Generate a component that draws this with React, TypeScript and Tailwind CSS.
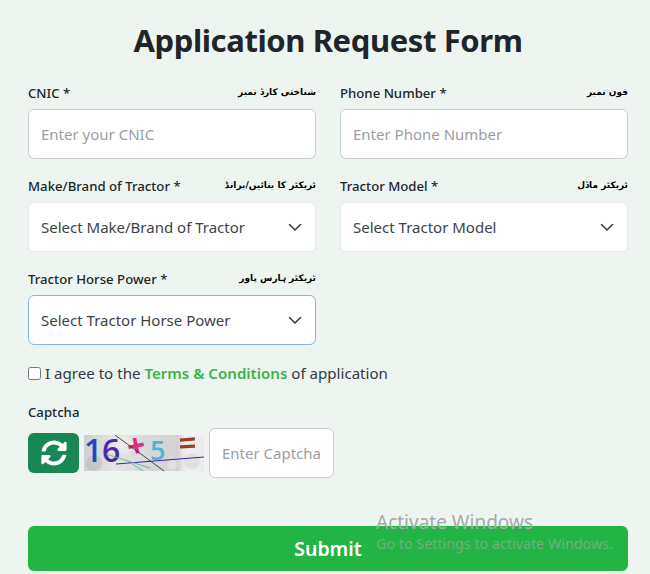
import React from "react";

const font = { fontFamily: '"Noto Sans", sans-serif' };

function Chevron() {
  return (
    <svg width="14" height="14" viewBox="0 0 14 14" className="shrink-0" fill="none">
      <path d="M1.5 4.5 7 10l5.5-5.5" stroke="#343a40" strokeWidth="1.5" strokeLinecap="round" strokeLinejoin="round" />
    </svg>
  );
}

function Label({ en, ur }: { en: string; ur: string }) {
  return (
    <div className="flex h-4 items-center justify-between mb-2">
      <label className="text-[13.2px] font-medium leading-4 text-[#212529]">{en}</label>
      <span dir="rtl" className="text-[9px] font-bold leading-4 text-black -mt-0.5" style={{ fontFamily: '"DejaVu Sans", sans-serif' }}>{ur}</span>
    </div>
  );
}

function TextField({ en, ur, ph }: { en: string; ur: string; ph: string }) {
  return (
    <div>
      <Label en={en} ur={ur} />
      <input
        placeholder={ph}
        className="w-full h-[50px] rounded-md border border-[#c9cccc] bg-white px-3 text-[15px] text-[#212529] placeholder:text-[#9a9ea3] outline-none"
      />
    </div>
  );
}

function SelectField({ en, ur, ph, focus }: { en: string; ur: string; ph: string; focus?: boolean }) {
  return (
    <div>
      <Label en={en} ur={ur} />
      <div className={focus
        ? "flex h-[50px] items-center justify-between rounded-md border border-[#86b7e8] bg-white pl-3 pr-[13px] text-[15px] text-[#3c4348]"
        : "flex h-[50px] items-center justify-between rounded-md border border-[#e6e9e8] bg-white pl-3 pr-[13px] text-[15px] text-[#3c4348]"}>
        <span>{ph}</span>
        <Chevron />
      </div>
    </div>
  );
}

function Captcha() {
  return (
    <svg width="120" height="36" viewBox="0 0 120 36" className="shrink-0 overflow-visible" fontFamily="Open Sans">
      <defs>
        <linearGradient id="cg" x1="0" x2="1" y1="0" y2="0">
          <stop offset="0" stopColor="#cfcfcf" />
          <stop offset="0.25" stopColor="#e4e4e4" />
          <stop offset="0.55" stopColor="#d8d8d8" />
          <stop offset="0.78" stopColor="#d2d2d2" />
          <stop offset="0.85" stopColor="#f0f0f0" />
          <stop offset="1" stopColor="#ebebeb" />
        </linearGradient>
      </defs>
      <rect width="120" height="36" fill="url(#cg)" />
      <circle cx="10" cy="28" r="8" fill="#bdbdbd" opacity="0.6" />
      <circle cx="40" cy="10" r="9" fill="#ededed" opacity="0.7" />
      <circle cx="88" cy="30" r="5" fill="#e6e6e6" opacity="0.7" />
      <circle cx="108" cy="26" r="8" fill="#d8d8d8" opacity="0.6" />
      <text x="0" y="27" fontSize="32" fontWeight="600" fill="#1f49c4">1</text>
      <text x="18" y="27" fontSize="32" fontWeight="600" fill="#4b28a8">6</text>
      <text x="43" y="22" fontSize="32" fontWeight="700" fill="#e8287c" transform="rotate(-12 52 11)">+</text>
      <text x="66" y="25" fontSize="27" fontWeight="600" fill="#4fb2d6">5</text>
      <rect x="96" y="3" width="15" height="3.2" fill="#a03c28" transform="rotate(-5 103 5)" />
      <rect x="96" y="10" width="15" height="3.2" fill="#a03c28" transform="rotate(-3 103 12)" />
      <path d="M31 0 80 36" stroke="#222" strokeWidth="0.8" />
      <path d="M32 29 120 22" stroke="#3d1fb0" strokeWidth="1" />
      <path d="M22 19 66 33" stroke="#62b88f" strokeWidth="0.9" />
      <path d="M47 28 59 36" stroke="#4fb2d6" strokeWidth="0.9" />
    </svg>
  );
}

export default function App() {
  return (
    <div className="relative h-[574px] w-[650px] overflow-hidden bg-[#eef5f1] pl-7 pr-[22px] text-[#212529]" style={font}>
      <h1 className="pt-[18px] text-center text-[31px] font-bold leading-[44px] tracking-[-0.4px] text-[#1f2529]">Application Request Form</h1>
      <div className="mt-[23px] grid grid-cols-2 gap-x-6 gap-y-[19px]">
        <TextField en="CNIC *" ur="شناختی کارڈ نمبر" ph="Enter your CNIC" />
        <TextField en="Phone Number *" ur="فون نمبر" ph="Enter Phone Number" />
        <SelectField en="Make/Brand of Tractor *" ur="ٹریکٹر کا بنائیں/برانڈ" ph="Select Make/Brand of Tractor" />
        <SelectField en="Tractor Model *" ur="ٹریکٹر ماڈل" ph="Select Tractor Model" />
        <SelectField en="Tractor Horse Power *" ur="ٹریکٹر ہارس پاور" ph="Select Tractor Horse Power" focus />
      </div>
      <div className="mt-[18px] flex h-5 items-center text-[15.1px] text-[#33393e]">
        <input type="checkbox" className="mr-1 h-[13px] w-[13px] accent-white" />
        <span>I agree to the <span className="font-semibold text-[#39b54a]">Terms &amp; Conditions</span> of application</span>
      </div>
      <div className="mt-[21px] text-[13.2px] font-medium leading-4 text-[#212529]">Captcha</div>
      <div className="mt-2 flex items-center">
        <div className="flex h-10 w-[51px] items-center justify-center rounded-md bg-[#198754]">
          <svg width="26" height="26" viewBox="0 0 512 512" fill="#fff">
            <path d="M370.72 133.28C339.458 104.008 298.888 87.962 255.848 88c-77.458.068-144.328 53.178-162.791 126.85-1.344 5.363-6.122 9.15-11.651 9.15H24.103c-7.498 0-13.194-6.807-11.807-14.176C33.933 94.924 134.813 8 256 8c66.448 0 126.791 26.136 171.315 68.685L463.03 40.97C478.149 25.851 504 36.559 504 57.941V192c0 13.255-10.745 24-24 24H345.941c-21.382 0-32.09-25.851-16.971-40.971l41.75-41.749zM32 296h134.059c21.382 0 32.09 25.851 16.971 40.971l-41.75 41.75c31.262 29.273 71.835 45.319 114.876 45.28 77.418-.07 144.315-53.144 162.787-126.849 1.344-5.363 6.122-9.15 11.651-9.15h57.304c7.498 0 13.194 6.807 11.807 14.176C478.067 417.076 377.187 504 256 504c-66.448 0-126.791-26.136-171.315-68.685L48.97 471.03C33.851 486.149 8 475.441 8 454.059V320c0-13.255 10.745-24 24-24z" />
          </svg>
        </div>
        <div className="ml-[5px]"><Captcha /></div>
        <input
          placeholder="Enter Captcha"
          className="ml-[5px] h-[50px] w-[125px] rounded-md border border-[#c9cccc] bg-white px-3 text-[15px] placeholder:text-[#9a9ea3] outline-none"
        />
      </div>
      <button className="mt-[48px] flex h-[45px] w-full items-center justify-center rounded-md bg-[#22b445] text-[19.5px] font-semibold text-white">Submit</button>
      <div className="pointer-events-none absolute left-[376px] top-[510px] text-[#a5aaa8]">
        <div className="text-[19px] leading-6">Activate Windows</div>
        <div className="text-[14.3px] leading-5 text-[#6fb07d]">Go to Settings to activate Windows.</div>
      </div>
    </div>
  );
}
